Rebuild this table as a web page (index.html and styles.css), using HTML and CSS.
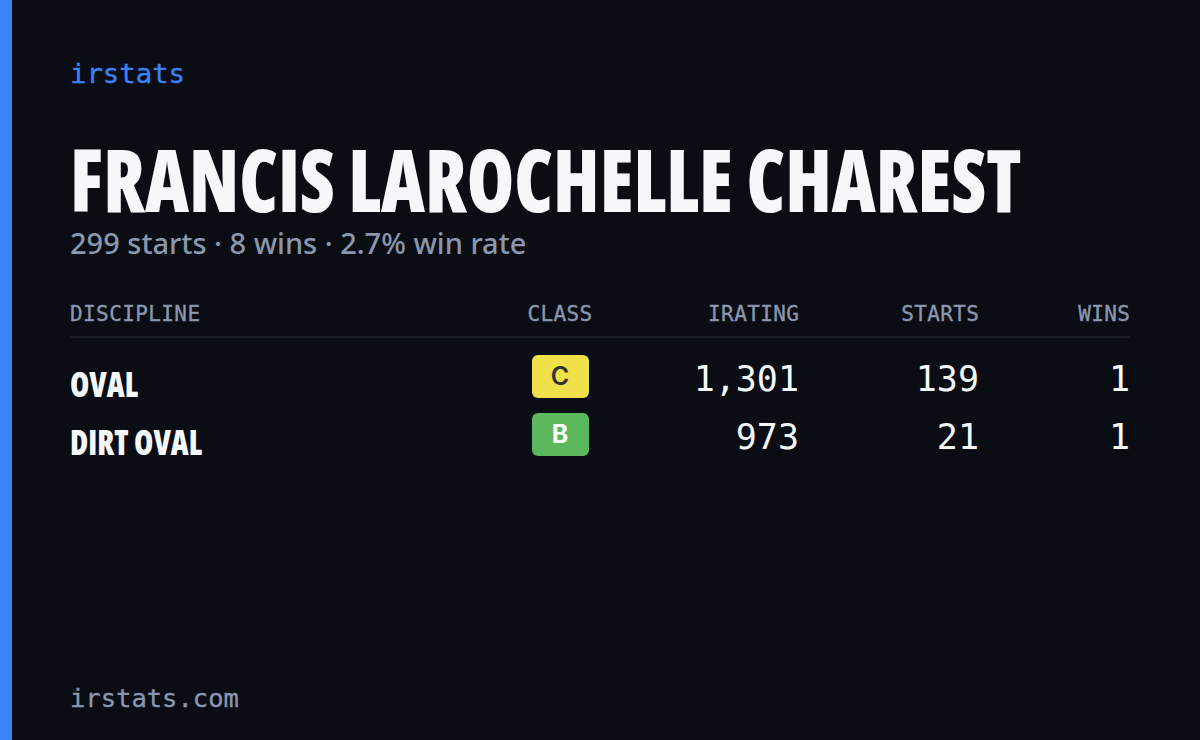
FILE: index.html
```html
<!DOCTYPE html>
<html lang="en">
<head>
<meta charset="utf-8">
<title>irstats – Francis Larochelle Charest</title>
<link rel="stylesheet" href="styles.css">
</head>
<body>
<div class="card">
  <div class="accent"></div>
  <main class="content">
    <div class="logo">irstats</div>
    <h1 class="title"><span class="squeeze">FRANCIS LAROCHELLE CHAREST</span></h1>
    <p class="summary">299 starts · 8 wins · 2.7% win rate</p>
    <div class="table">
      <div class="row head">
        <div class="c-disc">DISCIPLINE</div>
        <div class="c-class">CLASS</div>
        <div class="c-num">IRATING</div>
        <div class="c-num">STARTS</div>
        <div class="c-num">WINS</div>
      </div>
      <div class="body">
        <div class="row item">
          <div class="c-disc disc"><span class="squeeze">OVAL</span></div>
          <div class="c-class"><span class="badge badge-c">C</span></div>
          <div class="c-num num">1,301</div>
          <div class="c-num num">139</div>
          <div class="c-num num">1</div>
        </div>
        <div class="row item">
          <div class="c-disc disc"><span class="squeeze">DIRT OVAL</span></div>
          <div class="c-class"><span class="badge badge-b">B</span></div>
          <div class="c-num num">973</div>
          <div class="c-num num">21</div>
          <div class="c-num num">1</div>
        </div>
      </div>
    </div>
    <div class="footer">irstats.com</div>
  </main>
</div>
</body>
</html>
```
FILE: styles.css
```css
* { box-sizing: border-box; }
html, body { margin: 0; padding: 0; }
body {
  background: #0a0d14;
  width: 1200px;
  height: 740px;
  overflow: hidden;
}
.card {
  display: flex;
  height: 740px;
}
.accent {
  width: 12px;
  flex: 0 0 12px;
  background: #3b82f6;
}
.content {
  flex: 1;
  min-width: 0;
  display: flex;
  flex-direction: column;
  padding: 58px 70px 27px 58px;
}
.logo {
  font-family: "DejaVu Sans Mono", monospace;
  font-size: 27.3px;
  line-height: 32px;
  color: #3b82f6;
  -webkit-text-stroke: 0.35px #3b82f6;
}
.title {
  margin: 46px 0 0 0;
  font-family: "Open Sans", sans-serif;
  font-stretch: 75%;
  font-weight: 800;
  font-size: 86px;
  line-height: 1;
  color: #f5f7fb;
  white-space: nowrap;
}
.squeeze {
  display: inline-block;
  transform: scaleX(0.89);
  transform-origin: left center;
}
.summary {
  margin: 4px 0 0 0;
  font-family: "Noto Sans", sans-serif;
  font-weight: 500;
  font-size: 29px;
  line-height: 34px;
  color: #8b97ab;
}
.table {
  margin-top: 41px;
}
.row {
  display: grid;
  grid-template-columns: 1fr 120px 179px 180px 151px;
  align-items: center;
}
.head {
  font-family: "DejaVu Sans Mono", monospace;
  font-size: 21px;
  line-height: 26px;
  letter-spacing: 0.4px;
  color: #8a97ad;
  -webkit-text-stroke: 0.35px #8a97ad;
  padding-bottom: 9px;
  border-bottom: 2px solid #1a1e29;
}
.head .c-num { margin-right: -0.4px; }
.c-class { text-align: center; }
.c-num { text-align: right; }
.body { padding-top: 9px; }
.item { height: 58px; }
.disc {
  font-family: "Open Sans", sans-serif;
  font-stretch: 75%;
  font-weight: 800;
  font-size: 35px;
  line-height: 42px;
  padding-top: 15px;
  color: #f5f7fb;
  white-space: nowrap;
}
.num {
  font-family: "DejaVu Sans Mono", monospace;
  font-size: 35px;
  line-height: 42px;
  padding-top: 6px;
  color: #f5f7fb;
}
.badge {
  display: inline-flex;
  align-items: center;
  justify-content: center;
  width: 57px;
  height: 43px;
  border-radius: 6px;
  font-family: "Inter", sans-serif;
  font-weight: 600;
  font-size: 25px;
  vertical-align: middle;
}
.badge-c { background: #f0e14b; color: #333333; }
.badge-b { background: #5cb85c; color: #ffffff; font-weight: 700; }
.footer {
  margin-top: auto;
  font-family: "DejaVu Sans Mono", monospace;
  font-size: 25.5px;
  line-height: 30px;
  color: #8a97ad;
  -webkit-text-stroke: 0.35px #8a97ad;
}
```
